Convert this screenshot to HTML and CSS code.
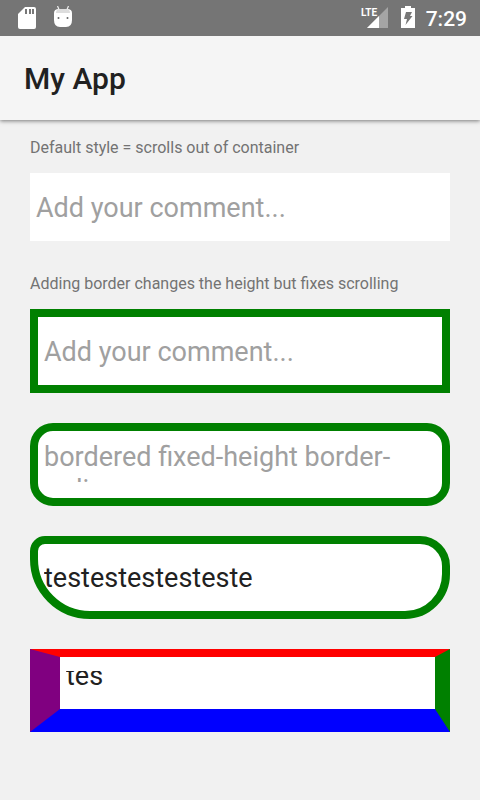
FILE: index.html
```html
<!DOCTYPE html>
<html lang="en">
<head>
<meta charset="utf-8">
<meta name="viewport" content="width=device-width, initial-scale=1">
<title>My App</title>
<link rel="stylesheet" href="styles.css">
</head>
<body>
<div class="status">
  <svg width="20" height="24" viewBox="0 0 20 24" aria-hidden="true">
    <path fill="#fff" d="M7 1h9q2 0 2 2v18q0 2-2 2H2q-2 0-2-2V8z"/>
    <path fill="#777" d="M7 3h2v5H7zM11 3h2v5h-2zM14 3h2v5h-2z"/>
  </svg>
  <svg width="20" height="24" viewBox="0 0 20 24" aria-hidden="true">
    <path fill="none" stroke="#eee" stroke-width="1.2" d="M4.500 0l1.500 3.500M15.500 0l-1.500 3.500"/>
    <path fill="#fff" d="M1 7q0-4 5-4h8q5 0 5 4v7q0 7-6 7H7q-6 0-6-7z"/>
    <path fill="#ddd" d="M3 7q0-4 4-4h6q4 0 4 4z"/>
    <circle cx="5.500" cy="12" r="1" fill="#666"/><circle cx="14.500" cy="12" r="1" fill="#666"/>
  </svg>
  <div class="status-right">
    <svg width="28" height="24" viewBox="0 0 28 24" role="img" aria-label="LTE signal">
      <path fill="#a5a5a5" d="M27 1v21H6z"/>
      <path fill="#757575" d="M0 0h16v11H0z"/>
      <path fill="#fff" d="M18 10v12H6z"/>
      <text class="network" x="0" y="10">LTE</text>
    </svg>
    <svg class="battery" width="14" height="24" viewBox="0 0 14 24" aria-hidden="true">
      <path fill="#fff" d="M4 0h6v2h4v20H0V2h4z"/>
      <path fill="#777" d="M5 6h6L9 10h2.500L4.500 19l1.500-6H3z"/>
    </svg>
    <span class="time">7:29</span>
  </div>
</div>
<header class="appbar"><h1>My App</h1></header>
<main class="form">
  <label class="caption" for="f1">Default style = scrolls out of container</label>
  <div class="field"><input id="f1" class="control" placeholder="Add your comment..."></div>
  <label class="caption" for="f2">Adding border changes the height but fixes scrolling</label>
  <div class="field bordered"><input id="f2" class="control" placeholder="Add your comment..."></div>
  <div class="field bordered rounded"><textarea class="control two-line" aria-label="Rounded comment" placeholder="bordered fixed-height border-radius"></textarea></div>
  <div class="field bordered corners"><input class="control" aria-label="Mixed corners" value="testestestesteste"></div>
  <div class="field sides"><div class="clip"><input class="control" aria-label="Mixed borders" value="tes"></div></div>
</main>
</body>
</html>
```
FILE: styles.css
```css
* { box-sizing: border-box; }
body {
  margin: 0;
  min-height: 100vh;
  background: #f1f1f1;
  color: #212121;
  font-family: Roboto, "Liberation Sans", sans-serif;
}
.status {
  display: flex;
  align-items: center;
  height: 36px;
  padding: 0 13px 0 18px;
  gap: 15px;
  background: #757575;
  color: #fff;
}
.status-right { display: flex; align-items: center; margin-left: auto; }
.network { fill: #fff; font: bold 10px "Liberation Sans Narrow", Roboto, sans-serif; }
.battery { margin: 0 11px 0 12px; }
.time { padding-top: 2px; font-size: 21px; line-height: 24px; font-weight: 500; }
.appbar {
  display: flex;
  align-items: center;
  height: 84px;
  padding: 2px 24px 0;
  background: #f5f5f5;
  box-shadow: 0 1px 4px rgba(0, 0, 0, 0.5);
  clip-path: inset(0 0 -10px 0);
}
h1 { margin: 0; font-size: 30px; line-height: 36px; font-weight: 500; }
.form { display: flex; flex-direction: column; padding: 15px 30px; }
.caption {
  padding-top: 1px;
  margin-bottom: 13px;
  font-size: 16px;
  line-height: 24px;
  color: #737373;
}
.field {
  display: flex;
  align-items: center;
  height: 68px;
  margin-bottom: 30px;
  padding: 2px 6px 0;
  background: #fff;
}
.control {
  display: block;
  width: 100%;
  height: 32px;
  margin: 0;
  padding: 0;
  border: 0;
  outline: 0;
  background: transparent;
  color: #212121;
  font: 27px/32px Roboto, "Liberation Sans", sans-serif;
  resize: none;
  overflow: hidden;
}
.control::placeholder { color: #a0a0a0; opacity: 1; }
.bordered { height: 84px; border: 8px solid #008000; }
.rounded { height: 83px; border-radius: 23px; align-items: flex-start; padding-top: 10px; }
.two-line { height: 41px; line-height: 33px; }
.corners { height: 83px; border-radius: 15px 30px 45px 60px; padding-top: 0; }
.sides {
  height: 83px;
  padding-top: 0;
  border-style: solid;
  border-width: 8px 15px 23px 30px;
  border-color: red green blue purple;
}
.clip {
  display: flex;
  align-items: flex-end;
  width: 100%;
  height: 24px;
  overflow: hidden;
}
.clip .control { flex-shrink: 0; height: 35px; padding-bottom: 3px; }
```
